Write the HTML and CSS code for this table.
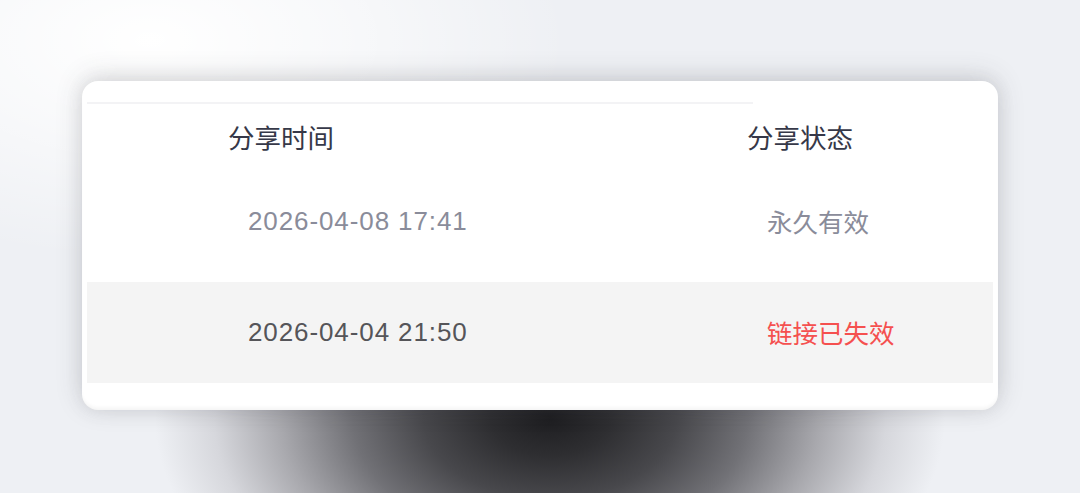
FILE: index.html
```html
<!DOCTYPE html>
<html lang="zh-CN">
<head>
<meta charset="utf-8">
<title>分享记录</title>
<link rel="stylesheet" href="styles.css">
</head>
<body>
  <div class="card">
    <div class="top-rule"></div>
    <div class="table">
      <div class="row head">
        <div class="cell">分享时间</div>
        <div class="cell">分享状态</div>
      </div>
      <div class="row body first">
        <div class="cell date muted">2026-04-08 17:41</div>
        <div class="cell status muted">永久有效</div>
      </div>
      <div class="row body second">
        <div class="cell date dark">2026-04-04 21:50</div>
        <div class="cell status expired">链接已失效</div>
      </div>
    </div>
  </div>
</body>
</html>
```

FILE: styles.css
```css
html, body {
  margin: 0;
  height: 100%;
}
body {
  box-sizing: border-box;
  width: 1080px;
  height: 493px;
  overflow: hidden;
  padding: 81px 82px 0 82px;
  font-family: "Liberation Sans", "Noto Sans CJK SC", sans-serif;
  background-color: #eef0f4;
  background-image:
    radial-gradient(ellipse 395px 250px at 550px 418px,
      #1e1e21 0%, #2e2e31 15%, #48484c 32%, #717176 50%, #a8a8ad 68%, #d6d7dc 85%, rgba(238,240,244,0) 100%),
    radial-gradient(ellipse 420px 220px at 150px 40px,
      #ffffff 0%, rgba(255,255,255,0.6) 45%, rgba(255,255,255,0) 100%);
  background-repeat: no-repeat;
}
.card {
  height: 329px;
  box-sizing: border-box;
  background: #ffffff;
  border-radius: 16px;
  padding: 21px 5px 27px 5px;
  box-shadow:
    0 -4px 28px rgba(60, 60, 70, 0.16),
    0 0 18px rgba(60, 60, 70, 0.10),
    inset 0 -4px 4px -2px rgba(0, 0, 0, 0.05);
}
.top-rule {
  width: 666px;
  height: 2px;
  background: #f3f3f5;
}
.table {
  display: flex;
  flex-direction: column;
}
.row {
  display: grid;
  grid-template-columns: 519px 1fr;
  align-items: center;
}
.cell {
  line-height: 36px;
  white-space: nowrap;
}
.head {
  height: 66px;
  color: #363848;
  font-size: 26.5px;
  font-family: "Noto Sans CJK SC", sans-serif;
}
.head .cell {
  padding-left: 141px;
}
.body .cell {
  padding-left: 161px;
}
.first {
  padding: 33px 0 43px 0;
}
.second {
  background: #f4f4f4;
  padding: 32px 0 33px 0;
}
.date {
  font-size: 26px;
  letter-spacing: 0.9px;
}
.status {
  font-size: 25.5px;
  font-family: "Noto Sans CJK SC", sans-serif;
}
.muted {
  color: #8a8c9a;
}
.dark {
  color: #555559;
}
.expired {
  color: #f5504f;
}
```
